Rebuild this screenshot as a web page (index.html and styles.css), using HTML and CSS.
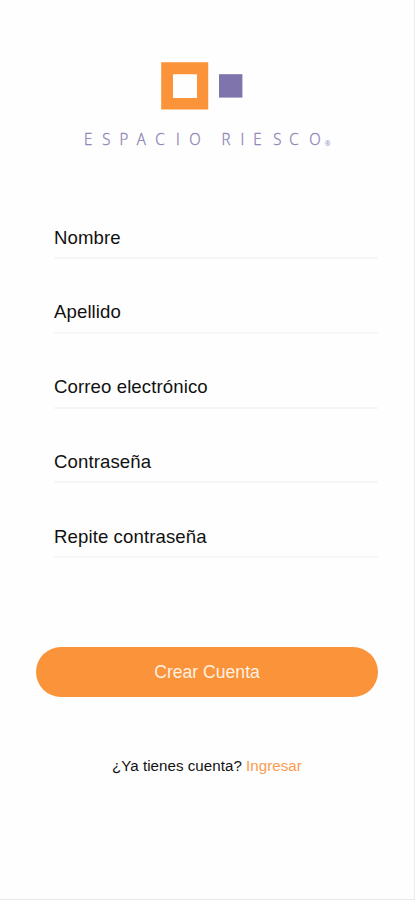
FILE: index.html
```html
<!DOCTYPE html>
<html lang="es">
<head>
<meta charset="utf-8">
<meta name="viewport" content="width=device-width, initial-scale=1">
<title>Crear Cuenta</title>
<link rel="stylesheet" href="styles.css">
</head>
<body>
<main class="screen">
  <svg class="logo" width="250" height="94" viewBox="82 60 250 94" role="img" aria-label="Espacio Riesco">
    <path class="logo-frame" fill-rule="evenodd" d="M161.2 62.2H208.2V109.4H161.2ZM173 74.2V98H197V74.2Z"/>
    <rect class="logo-square" x="219" y="74.2" width="23.4" height="23.4"/>
    <g class="logo-name" transform="translate(.8 0) scale(.88 1)">
      <text y="145.2" x="94.6 115.2 134.8 154.5 175.6 199 214.2">ESPACIO</text>
      <text y="145.2" x="250.7 272.3 287 309.5 327.8 350.6">RIESCO</text>
    </g>
    <text class="logo-mark" x="324.8" y="146">®</text>
  </svg>
  <form class="form">
    <div class="fields">
      <label class="field"><span>Nombre</span></label>
      <label class="field"><span>Apellido</span></label>
      <label class="field"><span>Correo electrónico</span></label>
      <label class="field"><span>Contraseña</span></label>
      <label class="field"><span>Repite contraseña</span></label>
    </div>
    <button class="submit" type="button">Crear Cuenta</button>
  </form>
  <p class="signin">¿Ya tienes cuenta? <a class="signin-link">Ingresar</a></p>
</main>
</body>
</html>
```
FILE: styles.css
```css
* {
  box-sizing: border-box;
}

body {
  margin: 0;
  background: #fefefe;
  color: #111;
  font-family: "Liberation Sans", Arial, sans-serif;
}

.screen {
  display: flex;
  flex-direction: column;
  height: 900px;
  padding: 60px 36px 0;
  border-right: 1px solid #ededed;
  border-bottom: 1px solid #e8e8e8;
}

.logo {
  display: block;
  flex: none;
  margin-left: 46px;
  overflow: visible;
}

.logo-frame {
  fill: #fa9339;
}

.logo-square {
  fill: #8074ad;
}

.logo-name {
  fill: #8f87b8;
  font: 300 17px "Open Sans", "Noto Sans", sans-serif;
  stroke: #8f87b8;
  stroke-width: .4px;
}

.logo-mark {
  fill: #8f87b8;
  font: 7px "Open Sans", sans-serif;
}

.form {
  display: flex;
  flex-direction: column;
  margin-top: 30.2px;
}

.fields {
  padding: 0 0 0 18px;
}

.field {
  display: flex;
  align-items: flex-end;
  height: 74.8px;
  padding-bottom: 8.3px;
  border-bottom: 2px solid #f6f6f6;
  font-size: 18.6px;
  letter-spacing: .1px;
  line-height: 22px;
}

.submit {
  height: 49.5px;
  width: 342px;
  margin-top: 89.3px;
  padding: 0;
  border: 0;
  border-radius: 25px;
  background: #fa9339;
  color: #fff0e2;
  font: 17.6px/48px "Liberation Sans", Arial, sans-serif;
}

.signin {
  margin: 58px 0 0;
  padding-left: 76px;
  font-size: 15.1px;
  letter-spacing: .05px;
  line-height: 22px;
  white-space: nowrap;
}

.signin-link {
  color: #fb9b50;
}
```
